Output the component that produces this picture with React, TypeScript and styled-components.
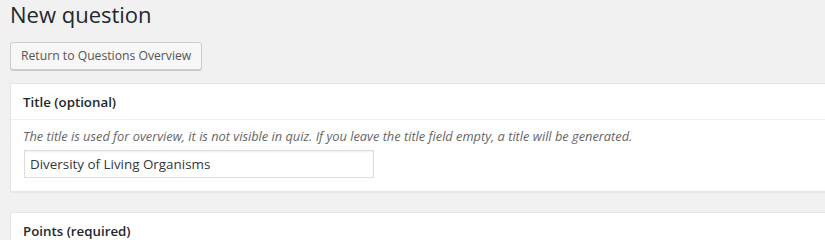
import styled, { createGlobalStyle } from "styled-components";

const GlobalStyle = createGlobalStyle`
  html, body {
    margin: 0;
    padding: 0;
    background: #f1f1f1;
    overflow: hidden;
  }
  body {
    font-family: "Open Sans", "Noto Sans", "Liberation Sans", sans-serif;
    color: #444;
    font-size: 13px;
  }
`;

const Page = styled.div`
  height: 100vh;
  overflow: hidden;
  padding: 0 0 0 10px;
`;

const Heading = styled.h1`
  margin: 0 0 13px 0;
  font-size: 22px;
  font-weight: 400;
  line-height: 29px;
  color: #23282d;
`;

const Button = styled.button`
  display: inline-block;
  height: 28px;
  padding: 0 10px 1px;
  margin: 0 0 13px 0;
  font-family: inherit;
  font-size: 12.2px;
  line-height: 26px;
  color: #555;
  background: #f7f7f7;
  border: 1px solid #ccc;
  border-radius: 3px;
  box-shadow: 0 1px 0 #ccc;
  cursor: pointer;
`;

const Postbox = styled.div`
  background: #fff;
  border: 1px solid #e5e5e5;
  box-shadow: 0 1px 1px rgba(0, 0, 0, 0.04);
  margin: 0 -20px 20px 0;
`;

const Handle = styled.h2`
  margin: 0;
  padding: 9px 12px 7px;
  font-size: 13.3px;
  font-weight: 600;
  line-height: 19px;
  color: #23282d;
  border-bottom: 1px solid #eee;
`;

const Inside = styled.div`
  padding: 6px 12px 12px;
`;

const Description = styled.p`
  margin: 0 0 4px;
  font-size: 12.8px;
  line-height: 20px;
  font-style: italic;
  color: #666;
`;

const TextInput = styled.input`
  box-sizing: border-box;
  display: block;
  width: 350px;
  height: 28px;
  margin: 1px;
  padding: 3px 5px;
  font-family: inherit;
  font-size: 13.4px;
  color: #32373c;
  background: #fff;
  border: 1px solid #ddd;
  box-shadow: inset 0 1px 2px rgba(0, 0, 0, 0.07);
  outline: none;
`;

export default function App() {
  return (
    <>
      <GlobalStyle />
      <Page>
        <Heading>New question</Heading>
        <Button type="button">Return to Questions Overview</Button>
        <Postbox>
          <Handle>Title (optional)</Handle>
          <Inside>
            <Description>
              The title is used for overview, it is not visible in quiz. If you leave the title field empty, a title will be generated.
            </Description>
            <TextInput type="text" defaultValue="Diversity of Living Organisms" />
          </Inside>
        </Postbox>
        <Postbox>
          <Handle>Points (required)</Handle>
        </Postbox>
      </Page>
    </>
  );
}
